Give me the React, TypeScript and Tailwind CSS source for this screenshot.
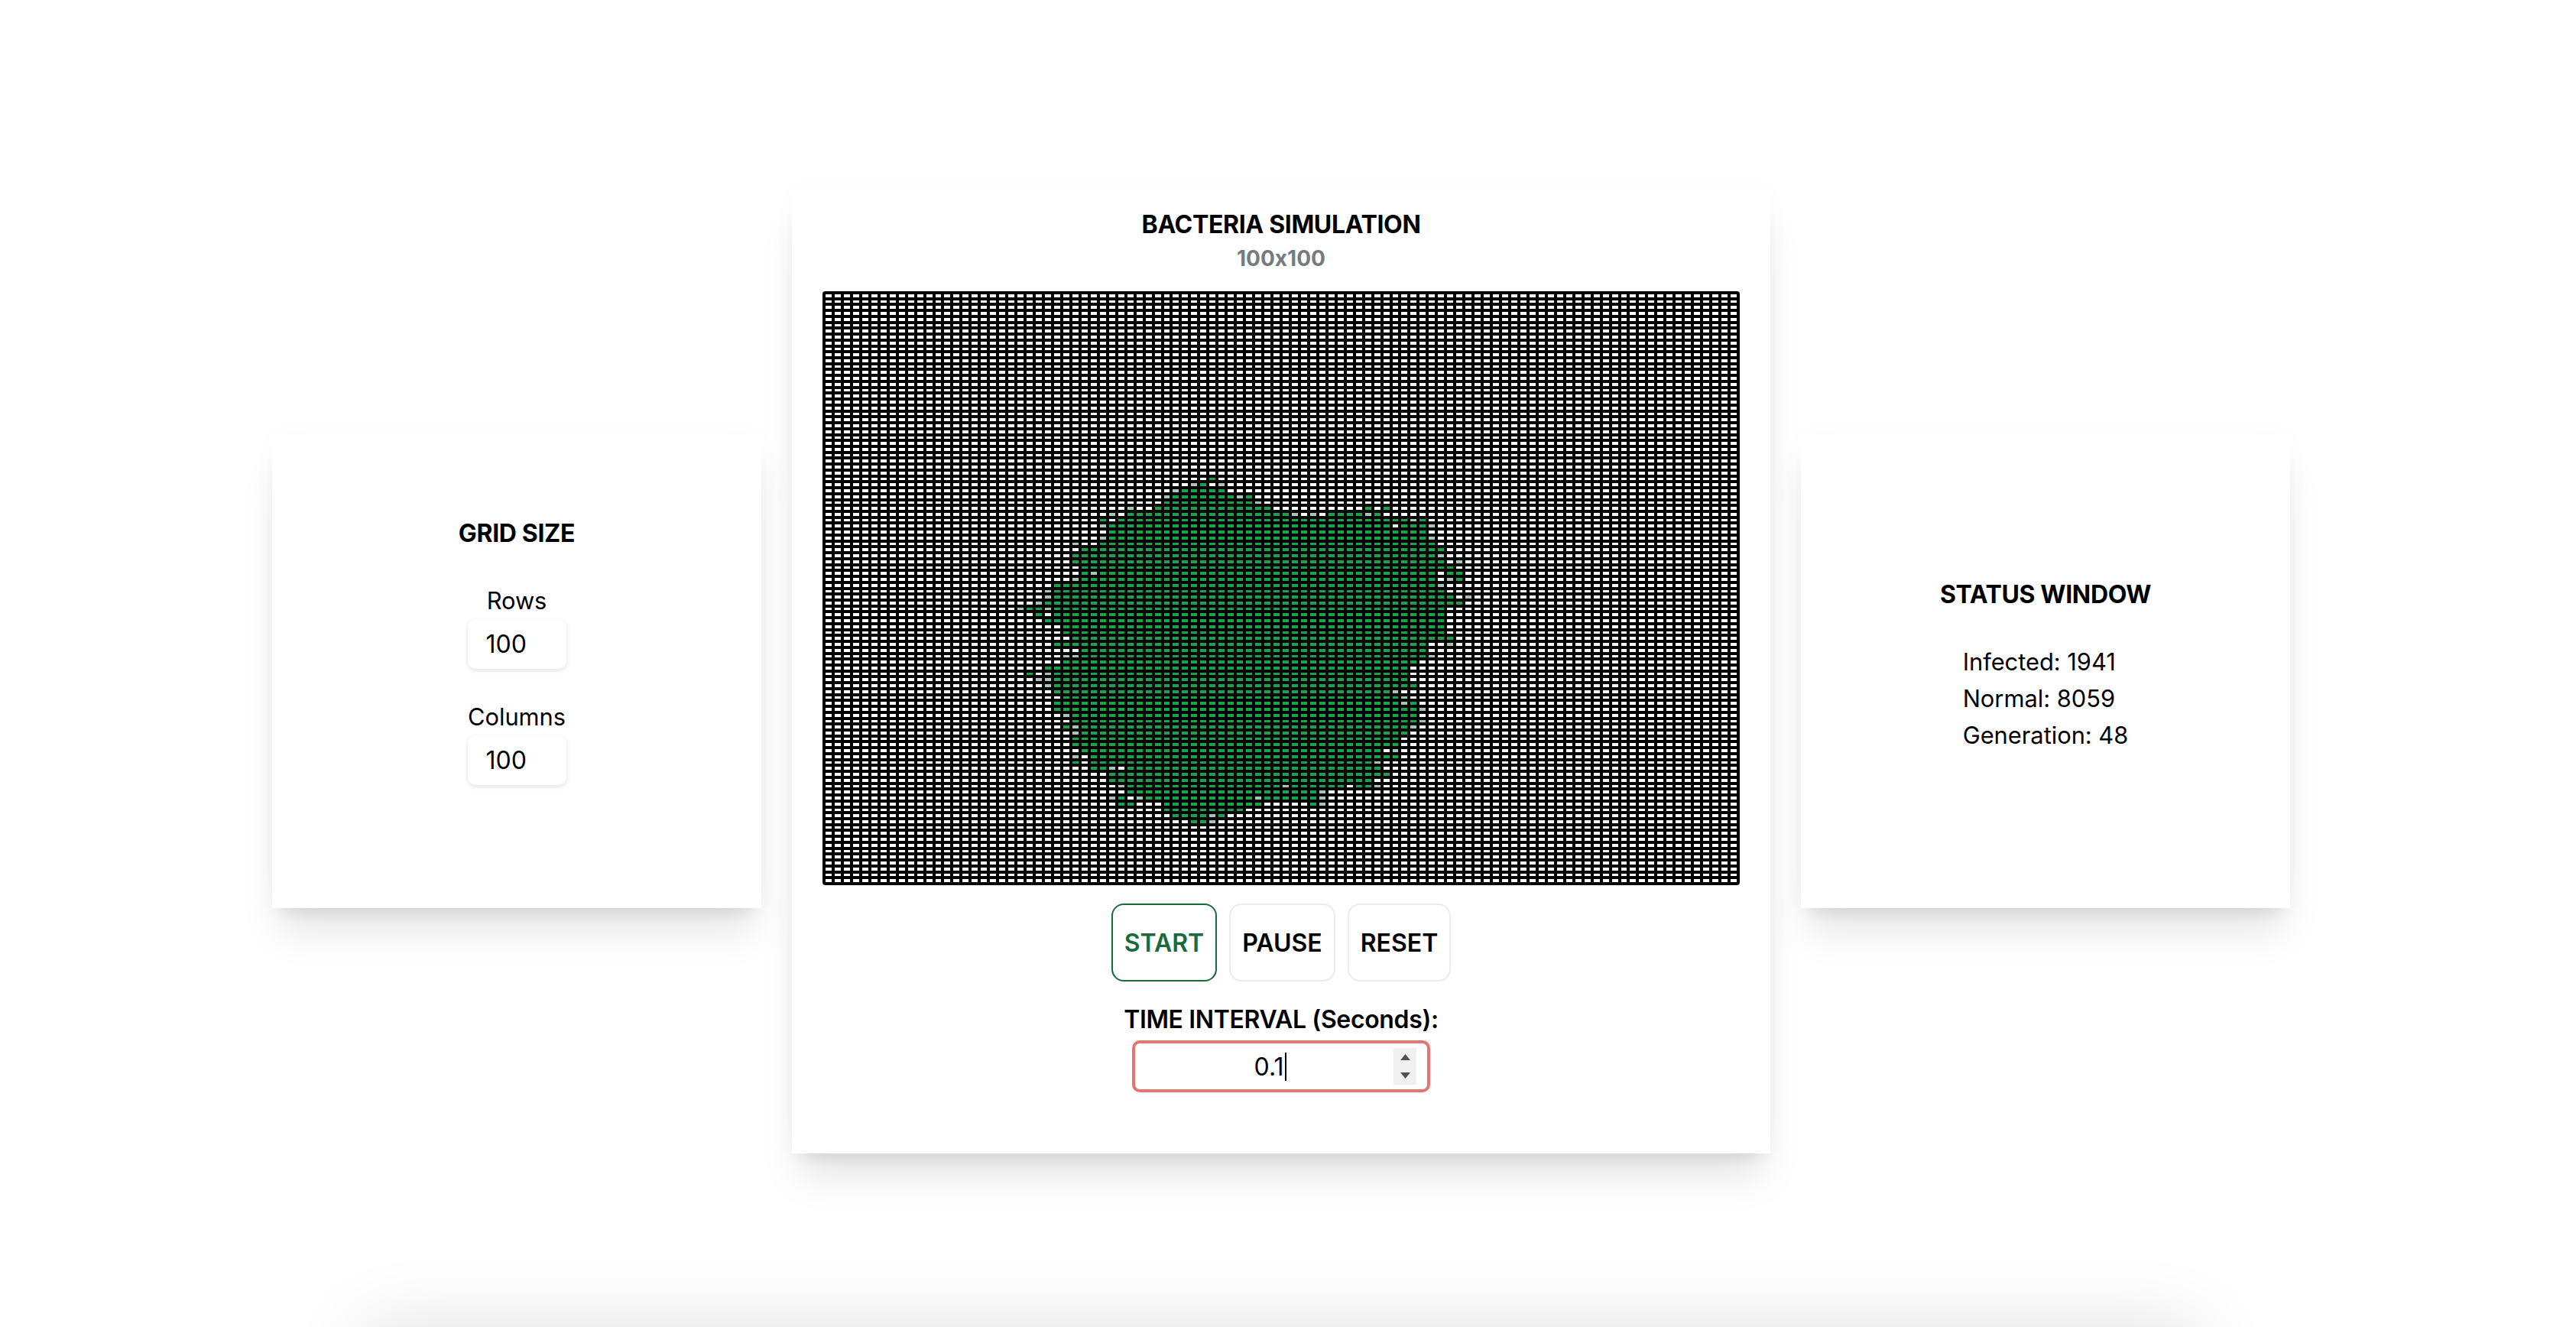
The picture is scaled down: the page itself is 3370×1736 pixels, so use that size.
type Span = number | [number, number];
type RowSpec = [number, Span[], number[]];

// infected cells per row: row, green columns, fading columns
const infection: RowSpec[] = [
  [31, [42], []],
  [32, [41], [40, 43]],
  [33, [[39, 43]], [38]],
  [34, [[38, 44], 46], [37, 45]],
  [35, [[37, 46]], [47, 49]],
  [36, [[36, 48], 59, 61], [33]],
  [37, [[33, 50], [55, 58], 60], [31, 51, 53, 59]],
  [38, [30, [32, 63], 65], [64]],
  [39, [[31, 61], [63, 65]], [30, 66]],
  [40, [[31, 65]], []],
  [41, [[31, 65]], [30, 66]],
  [42, [[30, 66]], [27]],
  [43, [[28, 67]], []],
  [44, [[27, 66]], [67]],
  [45, [[27, 67]], [69]],
  [46, [[28, 68]], []],
  [47, [28, [30, 66], 68, 69], [29]],
  [48, [[28, 66], 69], [27, 68]],
  [49, [[25, 66]], [67]],
  [50, [[25, 67]], [24]],
  [51, [[25, 68]], [24, 70]],
  [52, [[24, 69]], [23]],
  [53, [22, 23, [25, 67]], [21, 24]],
  [54, [23, [25, 67]], []],
  [55, [[24, 67]], []],
  [56, [[26, 67]], []],
  [57, [[26, 67]], []],
  [58, [[27, 68]], []],
  [59, [[25, 65]], [68]],
  [60, [[28, 65]], []],
  [61, [[28, 65]], [26, 27, 66]],
  [62, [[26, 64]], []],
  [63, [[24, 63]], []],
  [64, [22, [25, 63]], [24]],
  [65, [[25, 63]], [23, 24]],
  [66, [[25, 64]], [24]],
  [67, [[25, 61]], [62]],
  [68, [[26, 62]], [63]],
  [69, [[25, 62], 64], [63]],
  [70, [[25, 64]], [65]],
  [71, [[27, 64]], [26]],
  [72, [[27, 64]], [65]],
  [73, [26, [28, 63]], [27, 64]],
  [74, [[28, 63]], [27]],
  [75, [[27, 62]], []],
  [76, [[27, 62]], []],
  [77, [[28, 60]], [62]],
  [78, [[29, 62]], [27]],
  [79, [27, [29, 59]], [60]],
  [80, [29, 30, [33, 60]], [31]],
  [81, [[31, 61]], []],
  [82, [[31, 59]], []],
  [83, [[33, 49], [51, 56], 58, 59], [32, 50, 60]],
  [84, [[33, 53]], [54]],
  [85, [32, [35, 46], [48, 53]], [31, 34, 47, 54]],
  [86, [32, 33, [37, 47], 53], [54]],
  [87, [[37, 45]], []],
  [88, [[38, 41], 43], [42]],
  [89, [40, 41], [42]],
];

const GRID_W = 1200;
const GRID_H = 777;
const SIZE = 100;
const PITCH_X = (GRID_W - 4) / SIZE;
const PITCH_Y = (GRID_H - 4) / SIZE;

function buildPaths() {
  const state = new Map<number, "g" | "p">();
  for (const [row, green, pale] of infection) {
    for (const s of green) {
      const [a, b] = typeof s === "number" ? [s, s] : s;
      for (let c = a; c <= b; c++) state.set(row * SIZE + c, "g");
    }
    for (const c of pale) state.set(row * SIZE + c, "p");
  }
  const d = { w: "", g: "", p: "" };
  for (let r = 0; r < SIZE; r++) {
    const y0 = Math.round(2 + PITCH_Y * r) + 2;
    const y1 = Math.round(2 + PITCH_Y * (r + 1)) - 2;
    for (let c = 0; c < SIZE; c++) {
      const x0 = Math.round(2 + PITCH_X * c) + 2;
      const x1 = Math.round(2 + PITCH_X * (c + 1)) - 2;
      const key = state.get(r * SIZE + c) ?? "w";
      d[key] += `M${x0} ${y0}H${x1}V${y1}H${x0}Z`;
    }
  }
  return d;
}

function Grid() {
  const d = buildPaths();
  return (
    <svg width={GRID_W} height={GRID_H} viewBox={`0 0 ${GRID_W} ${GRID_H}`} className="mt-[23px] block shrink-0" shapeRendering="crispEdges">
      <rect width={GRID_W} height={GRID_H} rx="4" fill="#000000" shapeRendering="auto" />
      <path d={d.w} fill="#ffffff" />
      <path d={d.g} fill="#16a34a" />
      <path d={d.p} fill="#a9c5b7" />
    </svg>
  );
}

function SizeField({ label, top }: { label: string; top: string }) {
  return (
    <div className={`flex flex-col items-center ${top}`}>
      <label className="text-[30.8px] leading-[48px]">{label}</label>
      <input
        readOnly
        value="100"
        className="h-[65px] w-[129px] rounded-[10px] bg-white pl-[24px] text-[32px] shadow-[0_2px_6px_rgba(0,0,0,0.12)] outline-none"
      />
    </div>
  );
}

function ControlButton({ label, active, width }: { label: string; active?: boolean; width: string }) {
  return (
    <button
      className={`h-[102px] ${width} rounded-[16px] border-2 bg-white pt-[2px] text-[32px] font-semibold ${
        active ? "border-[#1a6b3c] text-[#1a6b3c]" : "border-[#ececec] text-black"
      }`}
    >
      {label}
    </button>
  );
}

export default function App() {
  return (
    <div className="h-[1736px] overflow-hidden bg-white pr-[18px] font-['Inter',sans-serif] text-black">
      <main className="flex h-[1736px] items-center justify-center gap-[40px] pt-[20px]">
        <section className="flex h-[620px] w-[640px] flex-col items-center bg-white pt-[106px] shadow-[0_40px_50px_-10px_rgba(0,0,0,0.1),0_16px_20px_-12px_rgba(0,0,0,0.1),0_0_40px_rgba(0,0,0,0.02)]">
          <h2 className="text-[32px] font-bold leading-[48px] tracking-[-0.34px]">GRID SIZE</h2>
          <SizeField label="Rows" top="mt-[40px]" />
          <SizeField label="Columns" top="mt-[39px]" />
        </section>

        <section className="flex h-[1262px] w-[1280px] flex-col items-center bg-white pt-[23px] shadow-[0_40px_50px_-10px_rgba(0,0,0,0.1),0_16px_20px_-12px_rgba(0,0,0,0.1),0_0_40px_rgba(0,0,0,0.02)]">
          <h1 className="text-[32px] font-bold leading-[48px] tracking-[-0.34px]">BACTERIA SIMULATION</h1>
          <p className="text-[28px] font-bold leading-[40px] text-[#757b80] [font-feature-settings:'calt'_0]">100x100</p>
          <Grid />
          <div className="mt-[24px] flex gap-[16px]">
            <ControlButton label="START" active width="w-[138px]" />
            <ControlButton label="PAUSE" width="w-[139px]" />
            <ControlButton label="RESET" width="w-[135px]" />
          </div>
          <label className="mt-[26px] text-[32px] font-semibold leading-[48px] tracking-[-0.36px]">TIME INTERVAL (Seconds):</label>
          <div className="relative mt-[3px] h-[68px] w-[390px] rounded-[10px] border-4 border-[#e57575] bg-white">
            <input readOnly value="0.1" className="h-full w-full pr-[32px] text-center text-[32px] outline-none" />
            <span className="absolute left-[196px] top-[12px] h-[37px] w-[2px] bg-black" />
            <span className="absolute left-[338px] top-[6px] flex h-[48px] w-[30px] flex-col items-center justify-between bg-[#f0f0f0] py-[8px]">
              <svg width="13" height="8" viewBox="0 0 13 8"><path d="M6.5 0L13 8H0Z" fill="#505050" /></svg>
              <svg width="13" height="8" viewBox="0 0 13 8"><path d="M0 0H13L6.5 8Z" fill="#505050" /></svg>
            </span>
          </div>
        </section>

        <section className="flex h-[620px] w-[640px] flex-col items-center bg-white pt-[186px] shadow-[0_40px_50px_-10px_rgba(0,0,0,0.1),0_16px_20px_-12px_rgba(0,0,0,0.1),0_0_40px_rgba(0,0,0,0.02)]">
          <h2 className="text-[32px] font-bold leading-[48px] tracking-[-0.34px]">STATUS WINDOW</h2>
          <div className="mt-[40px] text-[30.8px] leading-[48px]">
            <p>Infected: 1941</p>
            <p>Normal: 8059</p>
            <p>Generation: 48</p>
          </div>
        </section>
      </main>
      <div className="mx-auto h-[200px] w-[2400px] bg-white shadow-[0_0_100px_rgba(0,0,0,0.12)]" />
    </div>
  );
}
